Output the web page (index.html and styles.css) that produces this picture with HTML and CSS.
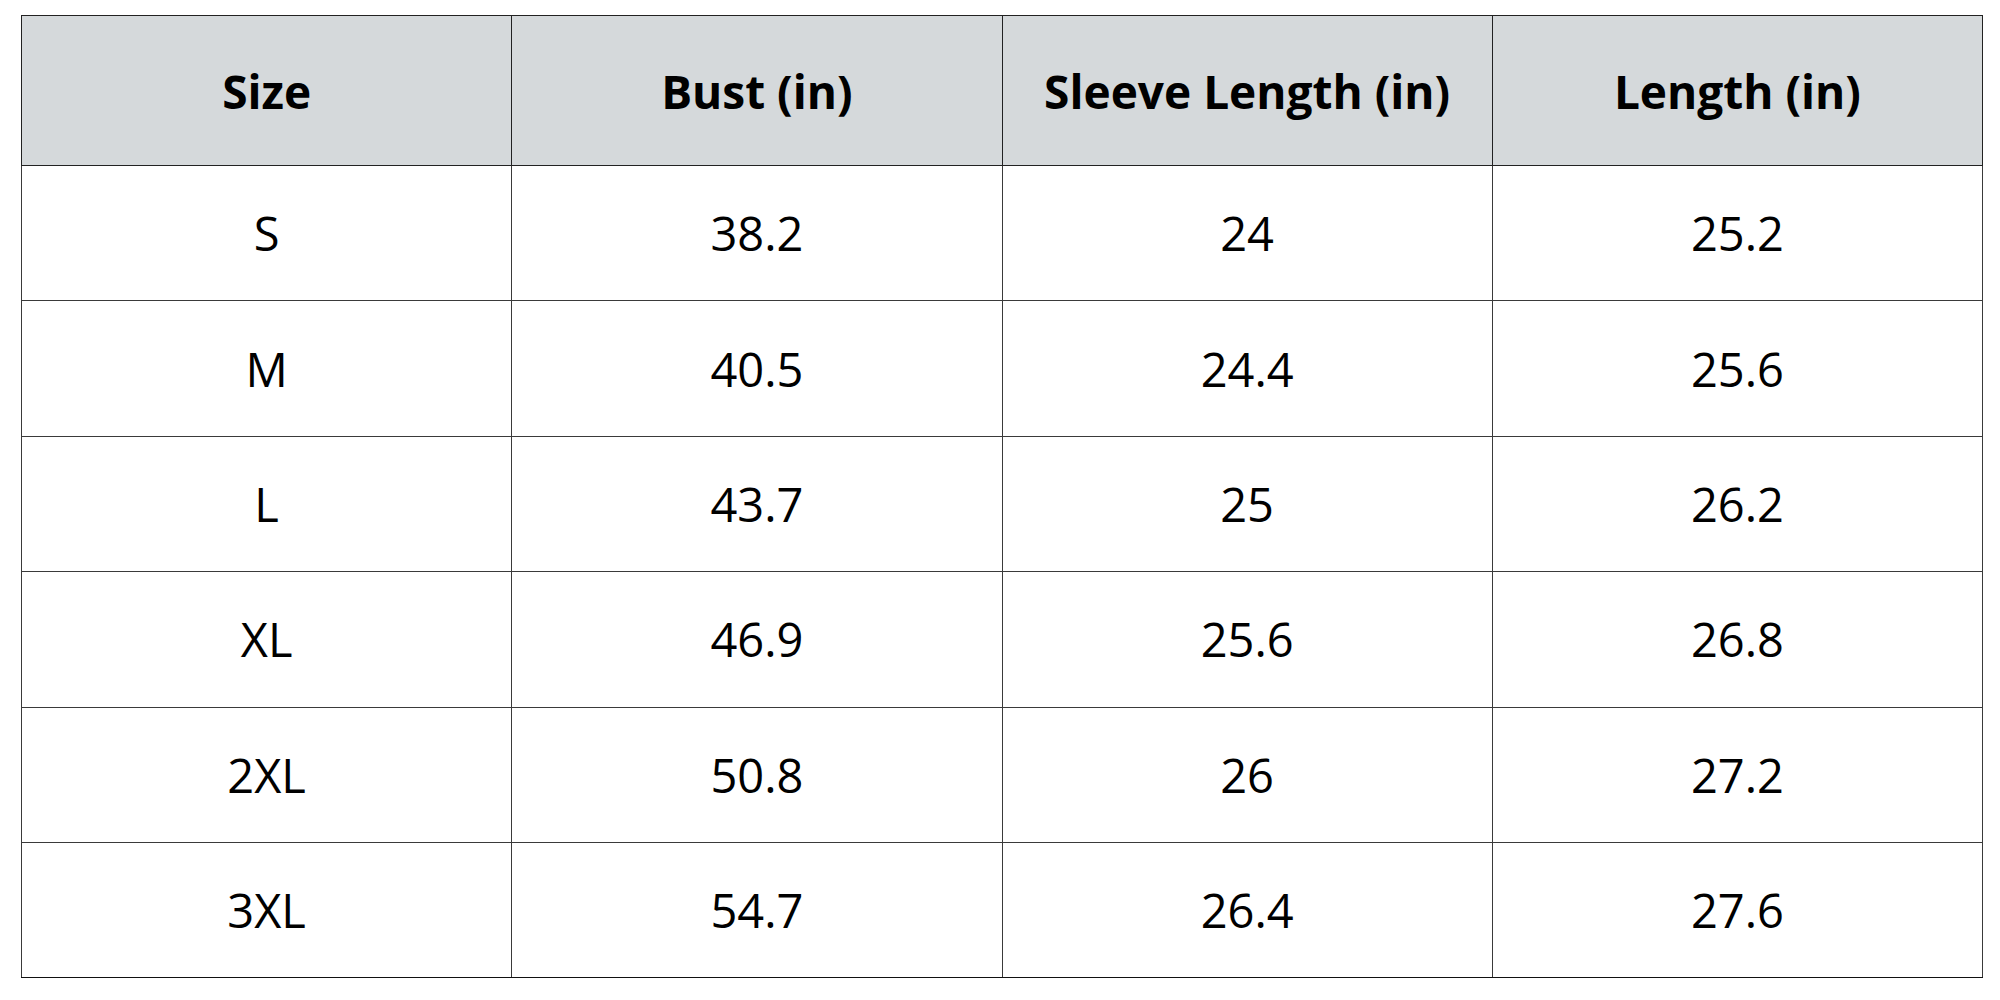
FILE: index.html
```html
<!DOCTYPE html>
<html lang="en">
<head>
<meta charset="utf-8">
<title>Size Chart</title>
<link rel="stylesheet" href="styles.css">
</head>
<body>
<table class="chart">
  <thead>
    <tr><th>Size</th><th>Bust (in)</th><th>Sleeve Length (in)</th><th>Length (in)</th></tr>
  </thead>
  <tbody>
    <tr><td>S</td><td>38.2</td><td>24</td><td>25.2</td></tr>
    <tr><td>M</td><td>40.5</td><td>24.4</td><td>25.6</td></tr>
    <tr><td>L</td><td>43.7</td><td>25</td><td>26.2</td></tr>
    <tr><td>XL</td><td>46.9</td><td>25.6</td><td>26.8</td></tr>
    <tr><td>2XL</td><td>50.8</td><td>26</td><td>27.2</td></tr>
    <tr><td>3XL</td><td>54.7</td><td>26.4</td><td>27.6</td></tr>
  </tbody>
</table>
</body>
</html>
```
FILE: styles.css
```css
html, body {
  margin: 0;
  background: #ffffff;
}
body {
  padding: 15px 0 0 21px;
  font-family: "Open Sans", "Noto Sans", sans-serif;
  color: #000;
}
.chart {
  border-collapse: collapse;
  width: 1962px;
  table-layout: fixed;
}
.chart th, .chart td {
  border: 1px solid #3a3a3a;
  text-align: center;
  vertical-align: middle;
  padding: 0;
}
.chart th {
  background: #d5d9db;
  height: 149px;
  font-weight: 700;
  font-size: 46px;
  border-color: #222;
}
.chart td {
  height: 134.4px;
  font-weight: 400;
  font-size: 47px;
}
.chart tbody tr:last-child td {
  border-bottom-color: #111;
}
```
